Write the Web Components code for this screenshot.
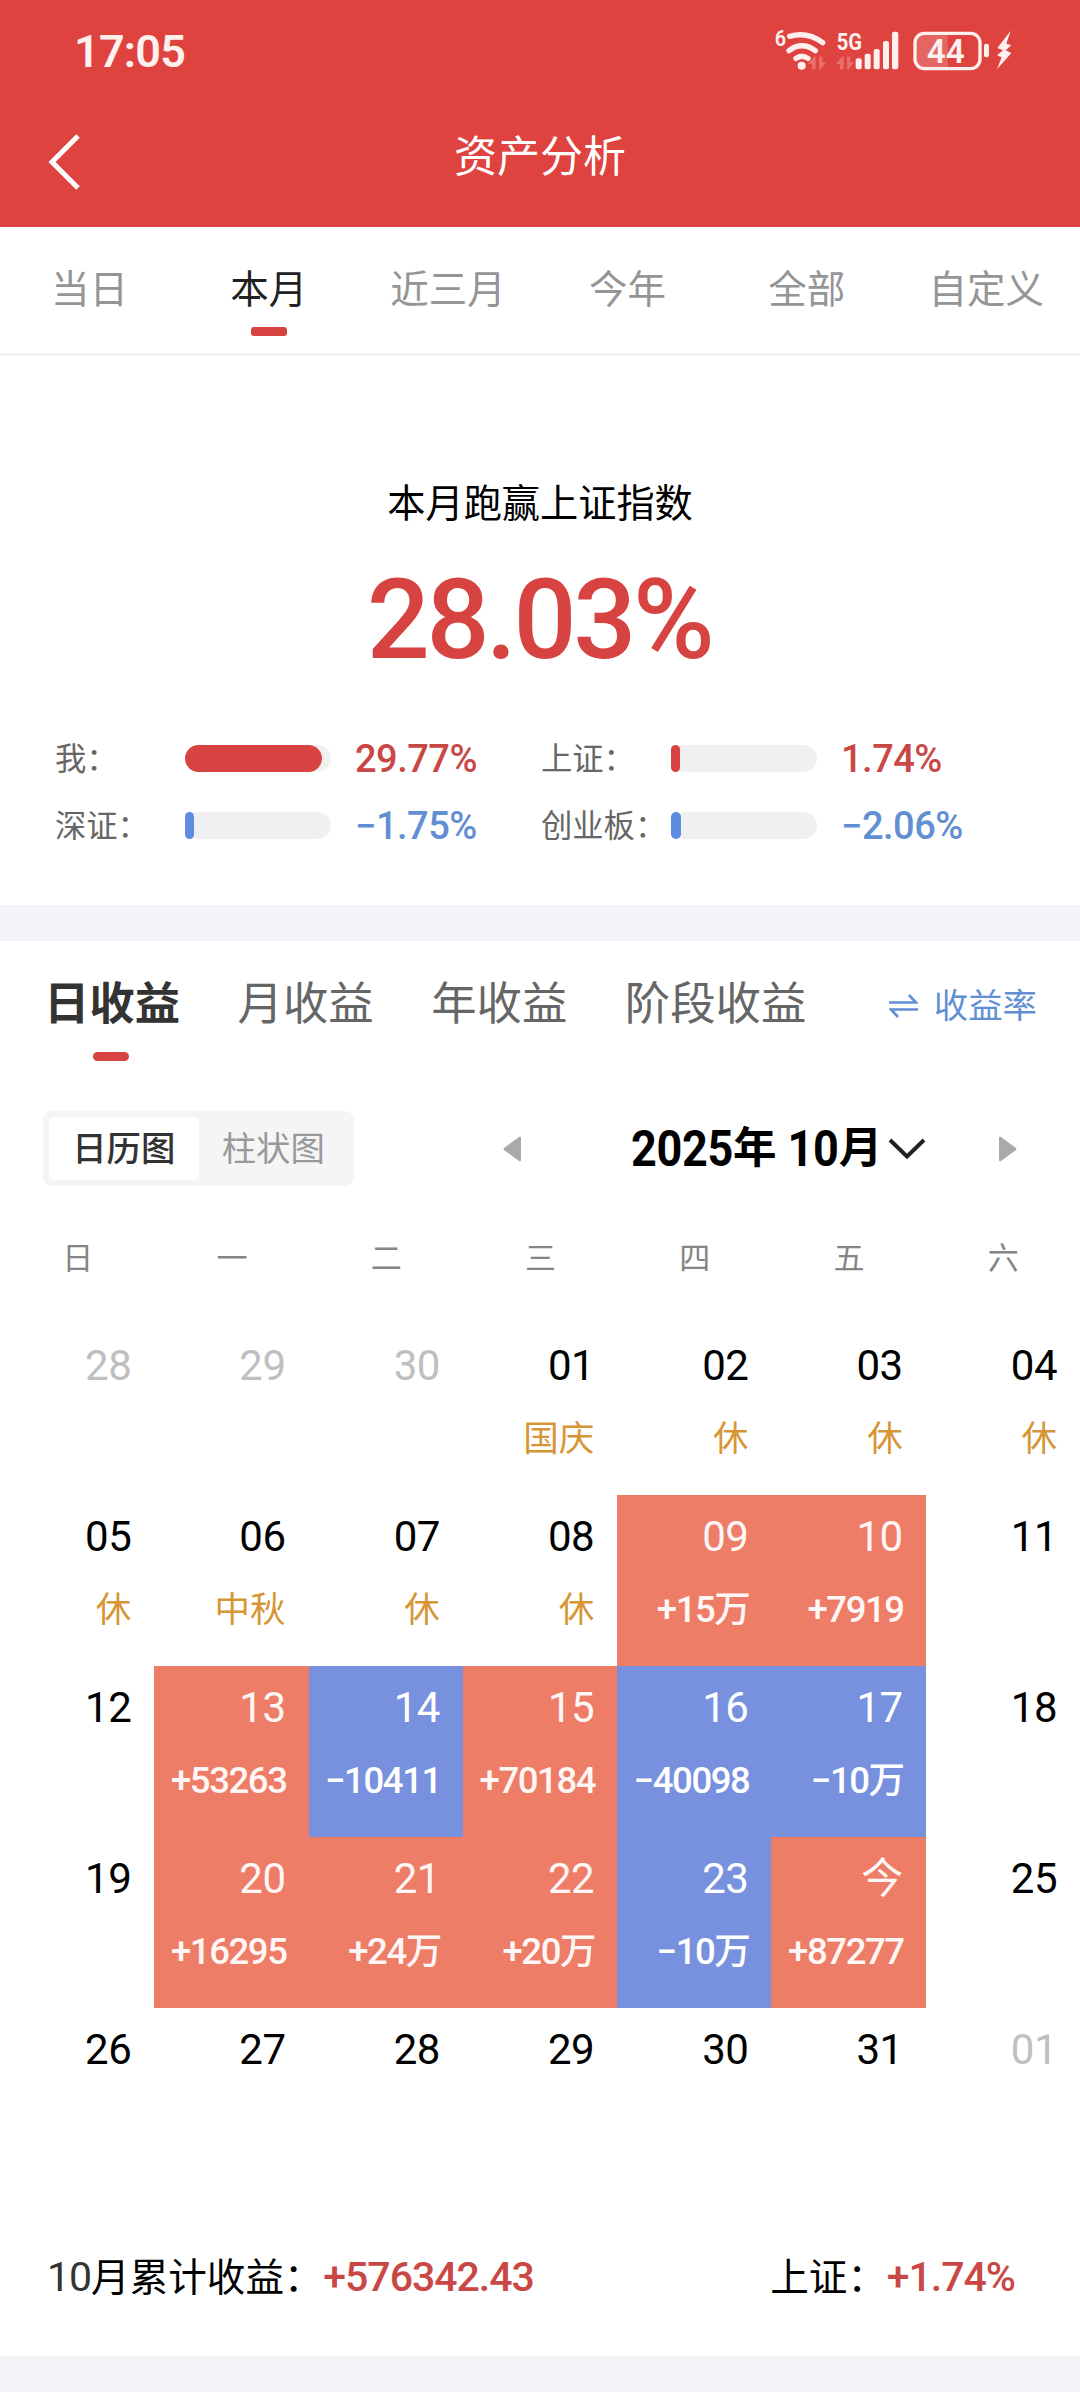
<!DOCTYPE html>
<html lang="zh-CN">
<head>
<meta charset="utf-8">
<meta name="viewport" content="width=device-width, initial-scale=1">
<title>资产分析</title>
<style>
	body {
		margin: 0;
		width: 1080px;
		height: 2400px;
		overflow: hidden;
		background: #fff;
		color: #000;
		font-family: Roboto, "Noto Sans CJK SC", sans-serif;
		--red: #d64340;
		--red-text: #c94845;
		--blue: #5c8de3;
		--blue-text: #628fd4;
		--gap: #f3f4f8;
	}
</style>
</head>
<body>
<asset-page></asset-page>

<script>
class BaseElement extends HTMLElement {
	connectedCallback() {
		if (this.shadowRoot) return
		this.attachShadow({mode: "open"}).innerHTML = this.render()
	}
}

customElements.define("status-bar", class extends BaseElement {
	render() {
		return `
			<style>
				:host {
					display: flex;
					justify-content: space-between;
					height: 100px;
					padding: 0 50px 0 74px;
					color: #fff0f0;
				}
				.time {
					font-size: 45px;
					font-weight: 600;
					line-height: 104px;
					letter-spacing: -.8px;
				}
				svg {
					display: block;
					margin-top: 10px;
					fill: currentColor;
					font-weight: 600;
				}
				.line {
					fill: none;
					stroke: currentColor;
					stroke-linecap: round;
				}
				.dim {
					opacity: .25;
				}
			</style>
			<span class="time">17:05</span>
			<svg width="270" height="80" viewBox="0 0 810 240">
				<text x="44" y="109" font-size="66" textLength="34" lengthAdjust="spacingAndGlyphs">6</text>
				<g class="line" stroke-width="16">
					<path d="M89 79Q142 64 188 98" />
					<path d="M87 122Q125 93 166 122" />
					<path d="M108 145Q125 132 144 145" />
				</g>
				<circle cx="125" cy="167" r="12" />
				<g class="dim">
					<path id="arrows" d="M145 160L162 140H167V178H156V162H145ZM177 140H187V156H198L183 178H177Z" />
					<use href="#arrows" x="84" />
				</g>
				<text x="230" y="119" font-size="70" font-weight="700" textLength="76" lengthAdjust="spacingAndGlyphs">5G</text>
				<rect x="287" y="145" width="18" height="33" rx="6" />
				<rect x="314" y="131" width="18" height="47" rx="6" />
				<rect x="341" y="117" width="18" height="61" rx="6" />
				<rect x="369" y="93" width="18" height="85" rx="6" />
				<rect x="396" y="65" width="19" height="113" rx="6" />
				<path opacity=".2" d="M563 72V174H490Q466 174 466 150V96Q466 72 490 72Z" />
				<rect class="line" x="465" y="70" width="195" height="106" rx="28" stroke-width="10" />
				<text x="500" y="158" font-size="102" textLength="114" lengthAdjust="spacingAndGlyphs">44</text>
				<rect x="672" y="101" width="15" height="41" rx="7" />
				<path d="M752 62L712 114L729 121L711 136L725 142L711 178L754 129L737 121L754 106L739 101Z" />
			</svg>
		`
	}
})

customElements.define("nav-bar", class extends BaseElement {
	render() {
		return `
			<style>
				:host {
					display: grid;
					grid-template-columns: 120px 1fr 120px;
					height: 127px;
					color: #fff;
				}
				svg {
					margin: 32px 0 0 46px;
					fill: none;
					stroke: currentColor;
					stroke-width: 5;
				}
				.title {
					font-size: 43px;
					line-height: 115px;
					text-align: center;
				}
			</style>
			<svg width="36" height="60" viewBox="0 0 36 60"><path d="M32 4L6 30L32 56" /></svg>
			<div class="title"><slot></slot></div>
		`
	}
})

customElements.define("range-tab", class extends BaseElement {
	render() {
		return `
			<style>
				:host {
					display: flex;
					flex-direction: column;
					align-items: center;
					font-size: 38.5px;
					line-height: 60px;
					color: #959595;
				}
				:host([active]) {
					color: #222;
				}
				:host([active])::after {
					content: "";
					width: 36px;
					height: 9px;
					margin-top: 7px;
					border-radius: 3px;
					background: var(--red);
				}
			</style>
			<slot></slot>
		`
	}
})

customElements.define("range-tabs", class extends BaseElement {
	render() {
		return `
			<style>
				:host {
					display: grid;
					grid-template-columns: 179px repeat(5, 179.4px);
					box-sizing: border-box;
					height: 129px;
					padding-top: 33px;
					border-bottom: 3px solid #f2f2f2;
				}
			</style>
			<slot></slot>
		`
	}
})

customElements.define("stat-bar", class extends BaseElement {
	render() {
		const value = this.getAttribute("value")
		const color = value.startsWith("−") ? "blue" : "red"
		return `
			<style>
				:host {
					display: grid;
					grid-template-columns: 130px 146px 1fr;
					align-items: center;
					height: 67px;
				}
				.label {
					padding-bottom: 4px;
					font-size: 31.3px;
					font-feature-settings: "palt";
					color: #666;
					white-space: nowrap;
				}
				.track {
					height: 27px;
					border-radius: 14px;
					background: #f0f0f0;
				}
				.fill {
					width: ${this.getAttribute("fill")}px;
					height: 27px;
					border-radius: 14px;
					background: var(--${color});
				}
				.value {
					padding-left: 24px;
					font-size: 38px;
					font-weight: 500;
					letter-spacing: -.5px;
					color: var(--${color}-text);
				}
			</style>
			<span class="label"><slot></slot></span>
			<div class="track"><div class="fill"></div></div>
			<span class="value">${value}</span>
		`
	}
})

customElements.define("beat-summary", class extends BaseElement {
	render() {
		return `
			<style>
				:host {
					display: block;
					box-sizing: border-box;
					height: 549px;
					padding-top: 118px;
					text-align: center;
				}
				.caption {
					font-size: 38.2px;
					line-height: 60px;
				}
				.percent {
					height: 130px;
					margin: 21px 2px 0 0;
					font-size: 111px;
					font-weight: 500;
					line-height: 130px;
					letter-spacing: -3.4px;
					color: var(--red);
				}
				.stats {
					display: grid;
					grid-template-columns: 486px 1fr;
					margin-top: 40px;
					padding-left: 55px;
					text-align: left;
				}
			</style>
			<div class="caption">本月跑赢上证指数</div>
			<div class="percent">28.03%</div>
			<div class="stats">
				<stat-bar value="29.77%" fill="137">我：</stat-bar>
				<stat-bar value="1.74%" fill="9">上证：</stat-bar>
				<stat-bar value="−1.75%" fill="9">深证：</stat-bar>
				<stat-bar value="−2.06%" fill="10">创业板：</stat-bar>
			</div>
		`
	}
})

customElements.define("section-gap", class extends BaseElement {
	render() {
		return `
			<style>
				:host {
					display: block;
					height: 36px;
					background: var(--gap);
				}
			</style>
		`
	}
})

customElements.define("profit-tabs", class extends BaseElement {
	render() {
		return `
			<style>
				:host {
					display: flex;
					height: 170px;
					padding-left: 44px;
					font-size: 45.4px;
					line-height: 70px;
					white-space: nowrap;
					color: #666;
				}
				.tab {
					margin: 29px 57.5px 0 0;
				}
				.active {
					display: flex;
					flex-direction: column;
					align-items: center;
					width: 136px;
					font-weight: 700;
					color: #333;
				}
				.active::after {
					content: "";
					width: 36px;
					height: 9px;
					margin: 12px 2px 0 0;
					border-radius: 5px;
					background: var(--red);
				}
				.switch {
					display: flex;
					align-items: center;
					gap: 16px;
					height: 70px;
					margin: 30px 43px 0 auto;
					font-size: 34.4px;
					color: var(--blue-text);
				}
				svg {
					fill: none;
					stroke: currentColor;
					stroke-width: 2.6;
				}
			</style>
			<span class="tab active">日收益</span>
			<span class="tab">月收益</span>
			<span class="tab">年收益</span>
			<span class="tab">阶段收益</span>
			<span class="switch">
				<svg width="29" height="24" viewBox="0 0 29 24"><path d="M0 8.5H27L20 1M29 15.5H2L9 23" /></svg>
				收益率
			</span>
		`
	}
})

customElements.define("chart-switch", class extends BaseElement {
	render() {
		return `
			<style>
				:host {
					display: flex;
					box-sizing: border-box;
					width: 311px;
					height: 75px;
					padding: 6px;
					border-radius: 9px;
					background: #f5f5f5;
					font-size: 34.4px;
					line-height: 64px;
					text-align: center;
					color: #999;
				}
				span {
					flex: 1;
				}
				.active {
					border-radius: 5px;
					background: #fff;
					font-weight: 500;
					color: #333;
				}
			</style>
			<span class="active">日历图</span>
			<span>柱状图</span>
		`
	}
})

customElements.define("month-picker", class extends BaseElement {
	render() {
		return `
			<style>
				:host {
					display: flex;
					align-items: center;
					height: 75px;
					font-size: 43.5px;
					font-weight: 700;
				}
				.arrow {
					fill: #aaa;
				}
				.month {
					display: flex;
					align-items: center;
					width: 247px;
					margin-left: 109px;
					line-height: 75px;
					white-space: nowrap;
				}
				/* the digits stand taller than the characters beside them */
				.num {
					display: inline-block;
					font-size: 45px;
					letter-spacing: -.3px;
					transform: scaleY(1.1);
				}
				.ten {
					margin-left: 11px;
				}
				.chevron {
					margin: 0 72px 0 10px;
					fill: none;
					stroke: #222;
					stroke-width: 4;
				}
			</style>
			<svg class="arrow" width="19" height="26" viewBox="0 0 19 26"><path d="M18 2V24Q18 26 16 25L1 14Q0 13 1 12L16 1Q18 0 18 2Z" /></svg>
			<span class="month"><span class="num">2025</span>年<span class="num ten">10</span>月</span>
			<svg class="chevron" width="38" height="22" viewBox="0 0 38 22"><path d="M2 2L19 18.5L36 2" /></svg>
			<svg class="arrow" width="19" height="26" viewBox="0 0 19 26"><path d="M1 2V24Q1 26 3 25L18 14Q19 13 18 12L3 1Q1 0 1 2Z" /></svg>
		`
	}
})

customElements.define("day-cell", class extends BaseElement {
	render() {
		return `
			<style>
				:host {
					display: block;
					box-sizing: border-box;
					height: 171px;
					padding: 12px 22px 0 0;
					text-align: right;
					white-space: nowrap;
				}
				:host([kind="out"]) {
					color: #bfbfc3;
				}
				:host([kind="up"]) {
					background: #ee7d67;
					color: #fff7f5;
				}
				:host([kind="down"]) {
					background: #7791de;
					color: #fff;
				}
				.day {
					margin-right: 1px;
					font-size: 42px;
					line-height: 60px;
					letter-spacing: -.5px;
				}
				.note {
					margin-top: 13px;
					font-size: 36.5px;
					font-weight: 500;
					line-height: 60px;
					letter-spacing: -1.4px;
				}
				:host([kind="rest"]) .note {
					margin: 13px 1px 0 0;
					font-size: 35.5px;
					font-weight: 400;
					letter-spacing: 0;
					color: #d69636;
				}
			</style>
			<div class="day">${this.getAttribute("day")}</div>
			<div class="note"><slot></slot></div>
		`
	}
})

const DAYS = [
	["28", "out"], ["29", "out"], ["30", "out"], ["01", "rest", "国庆"], ["02", "rest", "休"], ["03", "rest", "休"], ["04", "rest", "休"],
	["05", "rest", "休"], ["06", "rest", "中秋"], ["07", "rest", "休"], ["08", "rest", "休"], ["09", "up", "+15万"], ["10", "up", "+7919"], ["11"],
	["12"], ["13", "up", "+53263"], ["14", "down", "−10411"], ["15", "up", "+70184"], ["16", "down", "−40098"], ["17", "down", "−10万"], ["18"],
	["19"], ["20", "up", "+16295"], ["21", "up", "+24万"], ["22", "up", "+20万"], ["23", "down", "−10万"], ["今", "up", "+87277"], ["25"],
	["26"], ["27"], ["28"], ["29"], ["30"], ["31"], ["01", "out"],
]

customElements.define("profit-calendar", class extends BaseElement {
	render() {
		const week = [..."日一二三四五六"].map(d => `<span>${d}</span>`).join("")
		const cells = DAYS.map(([day, kind = "", note = ""]) =>
			`<day-cell day="${day}" kind="${kind}">${note}</day-cell>`).join("")
		return `
			<style>
				:host {
					display: block;
				}
				.week, .days {
					display: grid;
					grid-template-columns: repeat(7, 1fr);
				}
				.week {
					height: 138px;
					font-size: 31px;
					line-height: 145px;
					text-align: center;
					text-indent: 1px;
					color: #858585;
				}
			</style>
			<div class="week">${week}</div>
			<div class="days">${cells}</div>
		`
	}
})

customElements.define("month-total", class extends BaseElement {
	render() {
		return `
			<style>
				:host {
					display: flex;
					justify-content: space-between;
					height: 177px;
					padding: 0 65px 0 47px;
					font-size: 38.6px;
					font-feature-settings: "palt";
					line-height: 197px;
				}
				.month {
					font-size: 41px;
					letter-spacing: -1px;
					color: #333;
				}
				b {
					margin-left: 20px;
					font-size: 41px;
					font-weight: 500;
					letter-spacing: -1px;
					color: var(--red-text);
				}
			</style>
			<span><span class="month">10</span>月累计收益：<b>+576342.43</b></span>
			<span>上证：<b>+1.74%</b></span>
		`
	}
})

customElements.define("asset-page", class extends BaseElement {
	render() {
		return `
			<style>
				:host {
					display: block;
				}
				header {
					background: #de433f;
				}
				.tools {
					display: flex;
					justify-content: space-between;
					padding: 0 63px 0 43px;
				}
			</style>
			<header>
				<status-bar></status-bar>
				<nav-bar>资产分析</nav-bar>
			</header>
			<range-tabs>
				<range-tab>当日</range-tab>
				<range-tab active>本月</range-tab>
				<range-tab>近三月</range-tab>
				<range-tab>今年</range-tab>
				<range-tab>全部</range-tab>
				<range-tab>自定义</range-tab>
			</range-tabs>
			<beat-summary></beat-summary>
			<section-gap></section-gap>
			<profit-tabs></profit-tabs>
			<div class="tools">
				<chart-switch></chart-switch>
				<month-picker></month-picker>
			</div>
			<profit-calendar></profit-calendar>
			<month-total></month-total>
			<section-gap></section-gap>
		`
	}
})
</script>
</body>
</html>
